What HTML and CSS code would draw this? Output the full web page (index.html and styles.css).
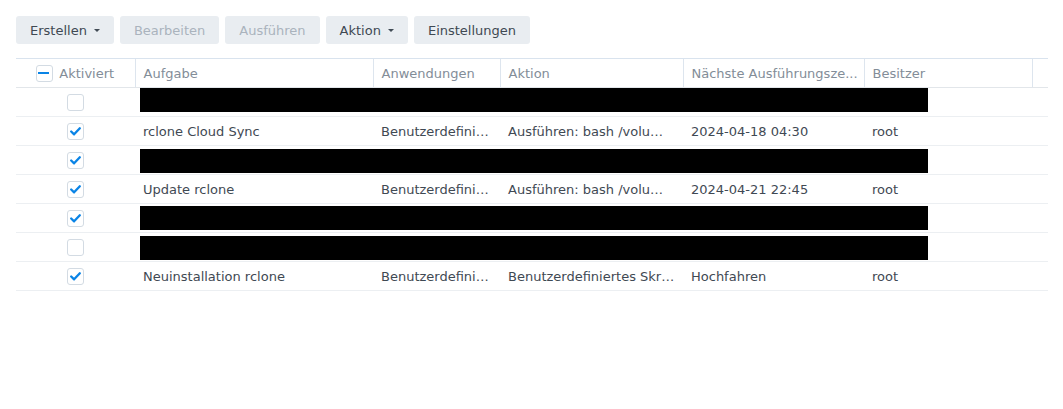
FILE: index.html
```html
<!DOCTYPE html>
<html lang="de">
<head>
<meta charset="utf-8">
<title>Aufgabenplaner</title>
<link rel="stylesheet" href="styles.css">
</head>
<body>
<div class="page">
  <div class="toolbar">
    <button class="btn">Erstellen<span class="caret"></span></button>
    <button class="btn" disabled>Bearbeiten</button>
    <button class="btn" disabled>Ausführen</button>
    <button class="btn">Aktion<span class="caret"></span></button>
    <button class="btn">Einstellungen</button>
  </div>
  <table class="grid">
    <colgroup>
      <col class="c-on"><col class="c-task"><col class="c-app"><col class="c-act"><col class="c-next"><col class="c-own"><col class="c-pad">
    </colgroup>
    <thead>
      <tr>
        <th class="th-check"><span class="cb cb-ind"><span class="ind"></span></span><span>Aktiviert</span></th>
        <th>Aufgabe</th>
        <th>Anwendungen</th>
        <th>Aktion</th>
        <th class="th-next" title="Nächste Ausführungszeit">Nächste Ausführungsze...</th>
        <th>Besitzer</th>
        <th></th>
      </tr>
    </thead>
    <tbody>
      <tr>
        <td class="td-check"><span class="cb"></span></td>
        <td colspan="5" class="redact"><div class="bar bar-top"></div></td>
        <td></td>
      </tr>
      <tr>
        <td class="td-check"><span class="cb"><svg viewBox="0 0 16 16"><path d="M3.4 8 L6.5 11 L12.6 4.6"/></svg></span></td>
        <td>rclone Cloud Sync</td>
        <td>Benutzerdefiniertes Skript</td>
        <td>Ausführen: bash /volume1/scripts/rclone_sync.sh</td>
        <td>2024-04-18 04:30</td>
        <td>root</td>
        <td></td>
      </tr>
      <tr>
        <td class="td-check"><span class="cb"><svg viewBox="0 0 16 16"><path d="M3.4 8 L6.5 11 L12.6 4.6"/></svg></span></td>
        <td colspan="5" class="redact"><div class="bar bar-low"></div></td>
        <td></td>
      </tr>
      <tr>
        <td class="td-check"><span class="cb"><svg viewBox="0 0 16 16"><path d="M3.4 8 L6.5 11 L12.6 4.6"/></svg></span></td>
        <td>Update rclone</td>
        <td>Benutzerdefiniertes Skript</td>
        <td>Ausführen: bash /volume1/scripts/rclone_update.sh</td>
        <td>2024-04-21 22:45</td>
        <td>root</td>
        <td></td>
      </tr>
      <tr>
        <td class="td-check"><span class="cb"><svg viewBox="0 0 16 16"><path d="M3.4 8 L6.5 11 L12.6 4.6"/></svg></span></td>
        <td colspan="5" class="redact"><div class="bar"></div></td>
        <td></td>
      </tr>
      <tr>
        <td class="td-check"><span class="cb"></span></td>
        <td colspan="5" class="redact"><div class="bar bar-low"></div></td>
        <td></td>
      </tr>
      <tr>
        <td class="td-check"><span class="cb"><svg viewBox="0 0 16 16"><path d="M3.4 8 L6.5 11 L12.6 4.6"/></svg></span></td>
        <td>Neuinstallation rclone</td>
        <td>Benutzerdefiniertes Skript</td>
        <td>Benutzerdefiniertes Skript</td>
        <td>Hochfahren</td>
        <td>root</td>
        <td></td>
      </tr>
    </tbody>
  </table>
</div>
</body>
</html>
```

FILE: styles.css
```css
html, body {
  margin: 0;
  padding: 0;
  background: #ffffff;
}

body {
  font-family: "DejaVu Sans", Verdana, sans-serif;
  font-size: 13px;
  color: #3f4953;
}

.page {
  padding: 16px 15px 16px 16px;
}

.toolbar {
  display: flex;
  gap: 6px;
  height: 28px;
  margin-bottom: 14px;
}

.btn {
  display: flex;
  align-items: center;
  height: 28px;
  padding: 0 14px;
  border: none;
  border-radius: 3px;
  background: #e9edf1;
  color: #3f4953;
  font-family: inherit;
  font-size: 13px;
  cursor: pointer;
}

.btn:disabled {
  color: #aab3bd;
  cursor: default;
}

.caret {
  width: 0;
  height: 0;
  margin-left: 7px;
  border-left: 3px solid transparent;
  border-right: 3px solid transparent;
  border-top: 3px solid #414b55;
}

.grid {
  width: 1032px;
  table-layout: fixed;
  border-collapse: collapse;
}

.c-on { width: 119px; }
.c-task { width: 238px; }
.c-app { width: 127px; }
.c-act { width: 183px; }
.c-next { width: 181px; }
.c-own { width: 168px; }
.c-pad { width: 16px; }

th, td {
  height: 28px;
  padding: 0 8px;
  white-space: nowrap;
  overflow: hidden;
  text-overflow: ellipsis;
  text-align: left;
  vertical-align: middle;
}

th {
  font-weight: normal;
  color: #838d98;
  border-top: 1px solid #d9e3ee;
  border-bottom: 1px solid #e2e6ea;
  border-left: 1px solid #dde5ee;
}

th:first-child {
  border-left: none;
}

.th-next {
  padding-right: 4px;
}

td {
  border-bottom: 1px solid #eceff2;
}

.th-check {
  text-align: center;
}

.th-check > span {
  display: inline-block;
  vertical-align: middle;
}

.th-check .cb {
  margin-right: 6px;
}

.td-check {
  text-align: center;
  padding: 0;
}

.cb {
  display: inline-block;
  box-sizing: border-box;
  width: 17px;
  height: 17px;
  border: 1px solid #d3dbe3;
  border-radius: 3px;
  background: #fff;
  vertical-align: middle;
  position: relative;
}

.cb svg {
  display: block;
  width: 15px;
  height: 15px;
}

.cb svg path {
  fill: none;
  stroke: #0a84e6;
  stroke-width: 2.5;
  stroke-linecap: round;
  stroke-linejoin: round;
}

.ind {
  display: block;
  width: 11px;
  height: 2px;
  margin: 6.5px 0 0 1px;
  background: #0a84e6;
}

.redact {
  padding: 0;
  vertical-align: top;
}

.bar {
  width: 788px;
  height: 24px;
  margin: 2px 0 0 5px;
  background: #000;
}

.bar-top {
  margin-top: 0;
}

.bar-low {
  margin-top: 3px;
}
```
